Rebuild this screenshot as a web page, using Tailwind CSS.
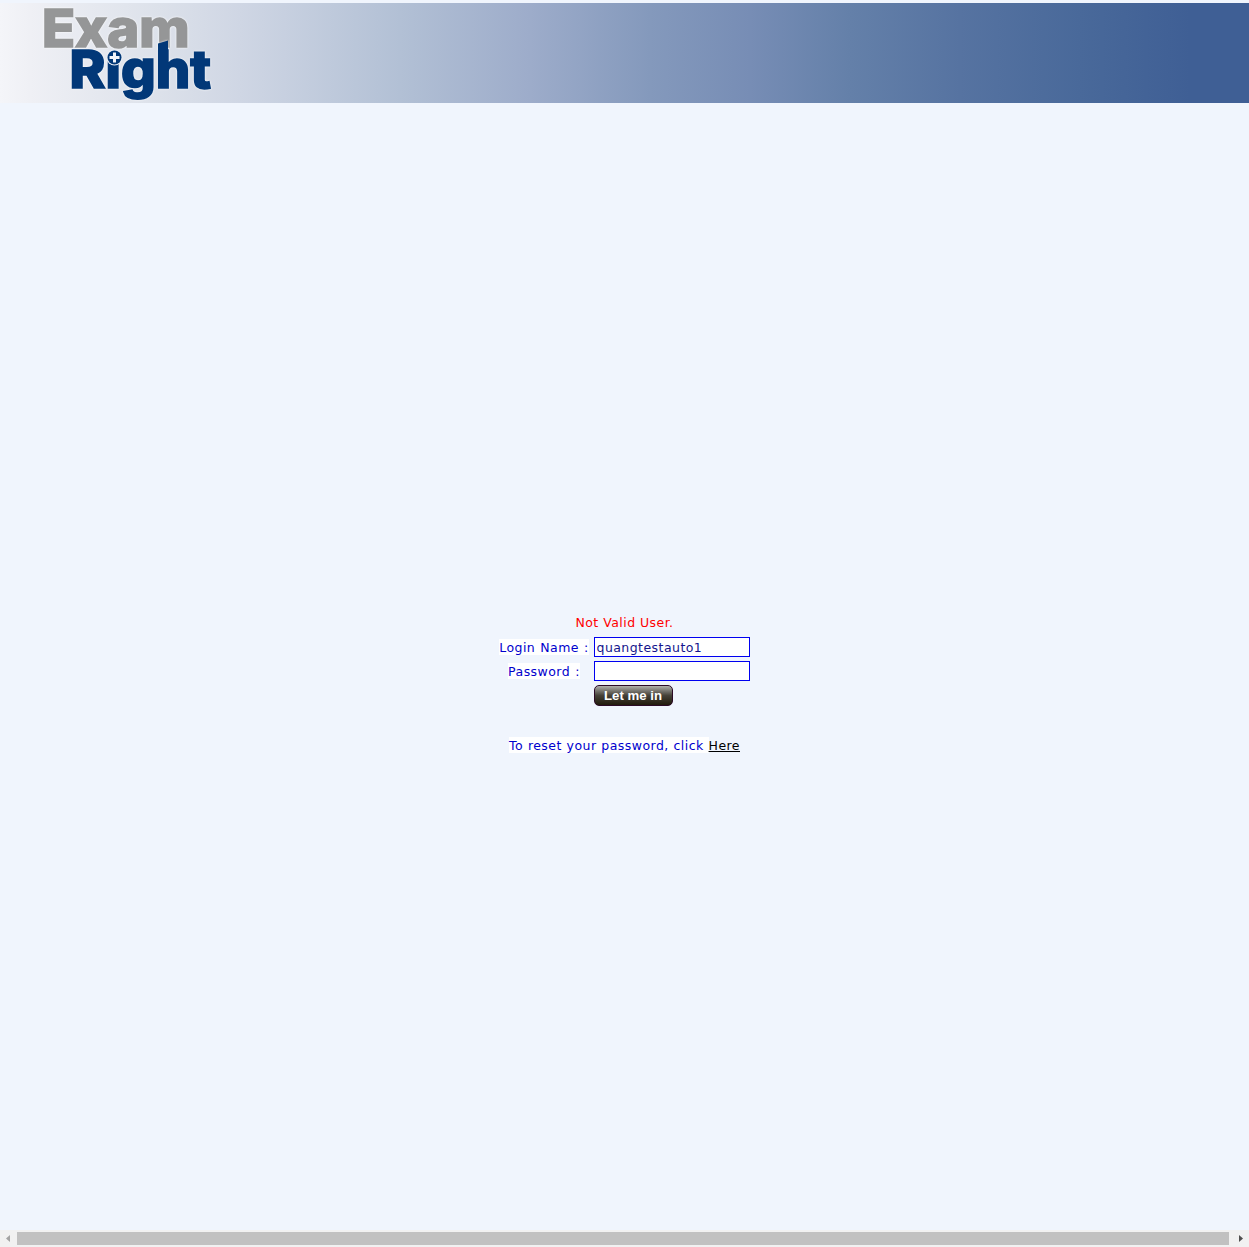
<!DOCTYPE html>
<html lang="en">
<head>
<meta charset="utf-8">
<title>Exam Right</title>
<script src="https://cdn.jsdelivr.net/npm/@tailwindcss/browser@4"></script>
</head>
<body class="flex h-[1247px] flex-col overflow-hidden bg-[#f0f5fd] pt-[3px] font-['DejaVu_Sans',sans-serif] text-[12.5px] leading-4 tracking-[0.45px] text-[#0000cd]">
<header class="h-[100px] shrink-0 bg-[linear-gradient(90deg,#f4f5f9_0,#eff0f5_30px,#dce1ea_160px,#cfd6e4_240px,#b2c0d5_400px,#9dacca_530px,#8499bc_650px,#778db5_750px,#6480a9_850px,#5673a1_960px,#49699a_1080px,#3f5f95_1190px,#3f5f95_1249px)]">
<svg class="block h-[100px] w-60 overflow-visible" viewBox="0 3 240 100" font-family="Inter, sans-serif" font-weight="800" font-size="52.5" letter-spacing="0">
<defs><clipPath id="stem"><path clip-rule="evenodd" d="M0 0H240V110H0zM105.500 40H121V59H105.500z"/></clipPath></defs>
<g class="drop-shadow-[0_0_1px_#ffffff]" fill="#959697" stroke="#959697" stroke-width="1.6">
<text x="42" y="46.500" textLength="147.500" lengthAdjust="spacingAndGlyphs">Exam</text>
</g>
<g class="drop-shadow-[0_0_1px_#ffffff]" fill="#023878">
<text clip-path="url(#stem)" x="69.500" y="87.500" stroke="#023878" stroke-width="1.6" textLength="141.500" lengthAdjust="spacingAndGlyphs">Right</text>
<path d="M158 43.500 168 40.500V60H158z"/>
</g>
<circle cx="114.500" cy="57.500" r="8" fill="#eef1f6"/>
<circle cx="114.500" cy="57.500" r="7" fill="#023878"/>
<path d="M114.500 52.500v10M109.500 57.500h10" stroke="#f4f6fa" stroke-width="3"/>
</svg>
</header>
<main class="flex grow flex-col items-center pt-[512px]">
<p class="h-[22px] text-[#ff0000]">Not Valid User.</p>
<form class="grid grid-cols-[91px_156px] gap-x-1 gap-y-1 pr-px">
<label class="mt-0.5 h-4 justify-self-center bg-white leading-[17px] [word-spacing:0.7px] whitespace-nowrap">Login Name :</label>
<input class="h-5 w-[156px] border border-[#0000f0] bg-white px-0.5 text-[#14148c] outline-none" value="quangtestauto1">
<label class="mt-0.5 h-4 justify-self-center bg-white leading-[17px] [word-spacing:0.7px] whitespace-nowrap">Password :</label>
<input type="password" class="h-5 w-[156px] border border-[#0000f0] bg-white px-0.5 outline-none">
<button type="button" class="col-start-2 h-[21px] w-[79px] rounded-[5px] border border-[#2b0a26] bg-linear-to-b from-[#b0b0ac] via-[#464239] via-50% to-[#211b0c] text-center font-['Liberation_Sans',sans-serif] text-[13.2px] leading-[19px] font-bold tracking-normal text-white">Let me in</button>
</form>
<p class="mt-[31px] h-4 leading-[17px] [word-spacing:0.4px] whitespace-pre"><span class="inline-block h-4 bg-white leading-[17px]">To reset your password, click </span><a class="text-black underline">Here</a></p>
</main>
<footer class="flex h-[17px] shrink-0 items-center bg-[#f1f1f1]">
<svg class="h-[17px] w-[17px]" viewBox="0 0 17 17"><path d="M6 8.500 10 5v7z" fill="#a3a3a3"/></svg>
<div class="h-[13px] w-[1212px] bg-[#c1c1c1]"></div>
<svg class="h-[17px] w-5" viewBox="0 0 20 17"><path d="M14 8.500 10 5v7z" fill="#505050"/></svg>
</footer>
</body>
</html>
